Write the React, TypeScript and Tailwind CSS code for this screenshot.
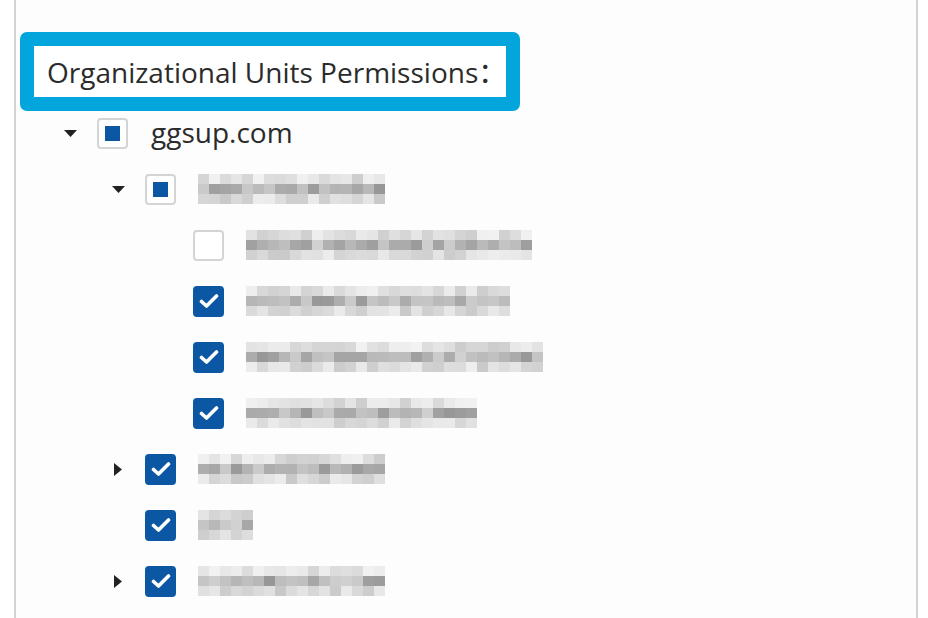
import React from 'react';

type Node = {
    level: number;
    caret?: 'down' | 'right';
    state: 'partial' | 'checked' | 'empty';
    label?: string;
    blur?: { cols: number; seed: number };
};

const nodes: Node[] = [
    { level: 0, caret: 'down', state: 'partial', label: 'ggsup.com' },
    { level: 1, caret: 'down', state: 'partial', blur: { cols: 17, seed: 3 } },
    { level: 2, state: 'empty', blur: { cols: 26, seed: 7 } },
    { level: 2, state: 'checked', blur: { cols: 24, seed: 11 } },
    { level: 2, state: 'checked', blur: { cols: 27, seed: 19 } },
    { level: 2, state: 'checked', blur: { cols: 21, seed: 23 } },
    { level: 1, caret: 'right', state: 'checked', blur: { cols: 17, seed: 29 } },
    { level: 1, state: 'checked', blur: { cols: 5, seed: 31 } },
    { level: 1, caret: 'right', state: 'checked', blur: { cols: 17, seed: 37 } },
];

// small deterministic noise for the pixelated (redacted) labels
function rand(seed: number) {
    let s = seed * 9301 + 49297;
    return () => {
        s = (s * 9301 + 49297) % 233280;
        return s / 233280;
    };
}

const Mosaic: React.FC<{ cols: number; seed: number }> = ({ cols, seed }) => {
    const r = rand(seed);
    const rows = [
        { lo: 205, hi: 242 },
        { lo: 150, hi: 210 },
        { lo: 200, hi: 238 },
    ];
    return (
        <div className="flex flex-col">
            {rows.map((band, i) => (
                <div key={i} className="flex">
                    {Array.from({ length: cols }).map((_, j) => {
                        const v = Math.round(band.lo + r() * (band.hi - band.lo));
                        return <div key={j} className="w-[11px] h-[10px]" style={{ backgroundColor: `rgb(${v},${v},${v})` }} />;
                    })}
                </div>
            ))}
        </div>
    );
};

const Caret: React.FC<{ dir?: 'down' | 'right' }> = ({ dir }) => (
    <div className="w-[24px] h-[24px] flex items-center justify-center">
        {dir === 'down' && (
            <svg width="13" height="7" viewBox="0 0 13 7">
                <polygon points="0,0 13,0 6.5,7" fill="#222" />
            </svg>
        )}
        {dir === 'right' && (
            <svg width="8" height="13" viewBox="0 0 8 13">
                <polygon points="0,0 8,6.5 0,13" fill="#222" />
            </svg>
        )}
    </div>
);

const Box: React.FC<{ state: Node['state'] }> = ({ state }) => {
    if (state === 'checked') {
        return (
            <div className="w-[31px] h-[31px] rounded-[4px] bg-[#0b57a4] flex items-center justify-center">
                <svg width="20" height="16" viewBox="0 0 20 16">
                    <polyline points="2.5,8.5 7.5,13 17.5,3" fill="none" stroke="#fff" strokeWidth="3.6" strokeLinecap="round" strokeLinejoin="round" />
                </svg>
            </div>
        );
    }
    return (
        <div className="w-[31px] h-[31px] rounded-[4px] border-2 border-[#d4d4d4] bg-white flex items-center justify-center">
            {state === 'partial' && <div className="w-[15px] h-[15px] bg-[#0b57a4]" />}
        </div>
    );
};

const App: React.FC = () => {
    return (
        <div className="w-[928px] h-[618px] bg-white pl-[14px] font-['Open_Sans','Noto_Sans_CJK_SC',sans-serif] overflow-hidden">
            <div className="w-[904px] h-full border-l-2 border-r-2 border-[#d3d3d3] bg-[#fdfdfd] pl-[4px] pt-[32px]">
                <div className="w-[500px] h-[79px] border-[14px] border-[#02a6dc] rounded-[7px] bg-white flex items-center pl-[13px]">
                    <span className="text-[28px] text-[#2b2b2b] leading-none whitespace-nowrap">Organizational Units Permissions：</span>
                </div>
                <ul className="mt-[-6px]">
                    {nodes.map((n, i) => (
                        <li key={i} className="h-[56px] flex items-center" style={{ paddingLeft: 38 + n.level * 48 }}>
                            <Caret dir={n.caret} />
                            <div className="ml-[15px]">
                                <Box state={n.state} />
                            </div>
                            {n.label && <span className="ml-[23px] text-[28px] text-[#2b2b2b] leading-none pb-[2px]">{n.label}</span>}
                            {n.blur && (
                                <div className="ml-[22px]">
                                    <Mosaic cols={n.blur.cols} seed={n.blur.seed} />
                                </div>
                            )}
                        </li>
                    ))}
                </ul>
            </div>
        </div>
    );
};

export default App;
